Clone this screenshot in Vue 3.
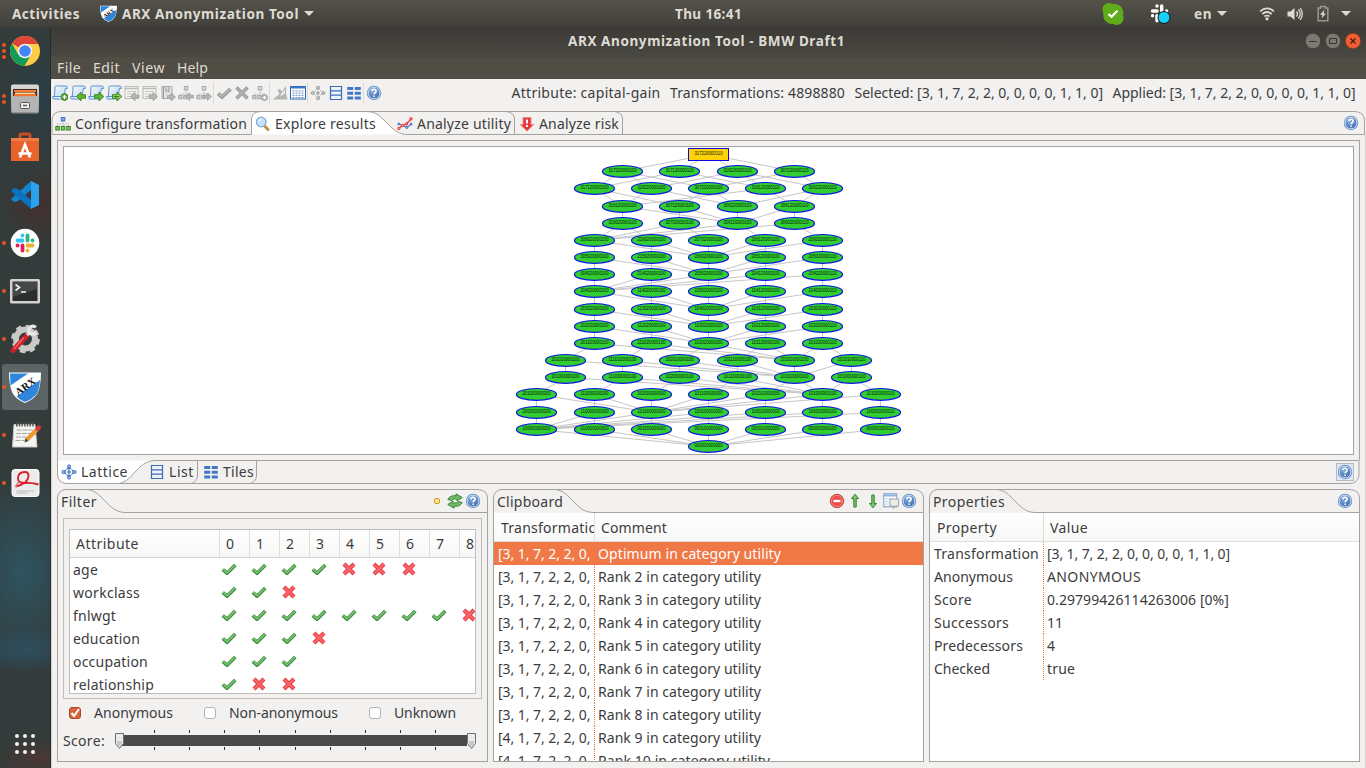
<script setup>
const vFit = {
  mounted(el, { value }) {
    const w = el.getBoundingClientRect().width
    el.style.letterSpacing = `${(value - w) / el.textContent.length}px`
  }
}

const toolbar = [
  ['new', 'open', 'save', 'saveas', 'gimport', 'gexport', 'gbook', 'gtreein', 'gtreeout'],
  ['gcheck', 'gcross', 'gtreeadd'],
  ['gbroom', 'table'],
  ['glattice', 'list', 'tiles'],
  ['help']
]
const status = [
  ['Attribute: capital-gain', 149],
  ['Transformations: 4898880', 175],
  ['Selected: [3, 1, 7, 2, 2, 0, 0, 0, 0, 1, 1, 0]', 248.5],
  ['Applied: [3, 1, 7, 2, 2, 0, 0, 0, 0, 1, 1, 0]', 243]
]
const dock = [
  ['chrome', 3], ['files', 2], ['store', 0], ['code', 0], ['slack', 1],
  ['term', 1], ['tools', 1], ['arx', 1], ['notes', 1], ['pdf', 1]
]

const levels = [
  '317220000110',
  '317220000100 317120000110 316220000110 307220000110',
  '317120000100 316220000100 307220000100 316120000110 306220000110',
  '316120000100 307120000100 306220000100 306120000110',
  '316020000100 307020000100 306120000100 306020000110',
  '306020000100 216020000100 207020000100 206120000100 206020000110',
  '305020000100 215020000100 206020000100 205120000100 205020000110',
  '304020000100 214020000100 205020000100 204120000100 204020000110',
  '204020000100 114020000100 105020000100 104120000100 104020000110',
  '203020000100 113020000100 104020000100 103120000100 103020000110',
  '202020000100 112020000100 103020000100 102120000100 102020000110',
  '201020000100 111020000100 102020000100 101120000100 101020000110',
  '201010000100 111010000100 102010000100 101110000100 101020000100 101010000110',
  '201000000100 111000000100 102000000100 101100000100 101010000100 101000000110',
  '201000000000 111000000000 102000000000 101100000000 101010000000 101000000100 101000000010',
  '200000000000 110000000000 101000000000 100100000000 100010000000 100000000100 100000000010',
  '100000000000 010000000000 001000000000 000100000000 000010000000 000000000100 000000000010',
  '000000000000'
].map((row, r) => {
  const ids = row.split(' ')
  return ids.map((id, i) => ({
    id,
    x: 644.5 + Math.round((i - (ids.length - 1) / 2) * 57.2),
    y: Math.floor(7.47 + r * 17.18) + 0.4
  }))
})
const nodes = levels.flat()
const steps = (a, b) => [...a].reduce((s, c, i) => s + Math.abs(c - b[i]), 0)
const edges = levels.slice(1).flatMap((row, r) =>
  levels[r].flatMap(a => row.filter(b => steps(a.id, b.id) === 1).map(b => ({ a, b })))
)

const filters = [
  ['age', 25, 'yyyynnn'], ['workclass', 67, 'yyn'], ['fnlwgt', 43, 'yyyyyyyyn'],
  ['education', 67, 'yyyn'], ['occupation', 75, 'yyy'], ['relationship', 81, 'ynn']
]
const clipboard = [['Optimum in category utility', 183]]
for (let i = 2; i <= 10; i++) clipboard.push([`Rank ${i} in category utility`, i === 10 ? 172 : 163])
const props = [
  ['Transformation', 105, '[3, 1, 7, 2, 2, 0, 0, 0, 0, 1, 1, 0]', 183],
  ['Anonymous', 79, 'ANONYMOUS', 94],
  ['Score', 38, '0.29799426114263006 [0%]', 182],
  ['Successors', 75, '11', 16],
  ['Predecessors', 89, '4', 8],
  ['Checked', 56, 'true', 28]
]
const checks = [['Anonymous', 79, true], ['Non-anonymous', 109, false], ['Unknown', 62, false]]
const ticks = [36, 71, 106, 141, 177, 212, 247, 282, 317]
</script>

<template>
  <div class="screen">
    <svg class="sprite" width="0" height="0">
      <defs>
        <linearGradient id="pg" x1="0" y1="0" x2="1" y2="1"><stop offset="0" stop-color="#fff" /><stop offset="1" stop-color="#a9cbf0" /></linearGradient>
        <radialGradient id="hg" cx=".4" cy=".3" r=".7"><stop offset="0" stop-color="#8fb2e0" /><stop offset="1" stop-color="#3d6cb0" /></radialGradient>
        <linearGradient id="cab" x1="0" y1="0" x2="0" y2="1"><stop offset="0" stop-color="#dcdcda" /><stop offset="1" stop-color="#8f8f8d" /></linearGradient>
      </defs>
      <symbol id="page" viewBox="0 0 16 16">
        <path d="M3.500 1H14q1.500 0 1.300 2.500h-2L12 12.500q-.2 1.500-2 1.500H1.500Q.3 14 .8 11.500h1.500L3 3q0-2 .5-2z" fill="url(#pg)" stroke="#5b93d1" />
        <path d="M.8 11.500h8.500q-.3 2.500 1 2.500" fill="#fff" stroke="#5b93d1" />
      </symbol>
      <symbol id="new" viewBox="0 0 16 16"><use href="#page" /><circle cx="12.500" cy="12" r="3.400" fill="#58ad35" stroke="#34761d" stroke-width=".8" /><path d="M12.500 10v4M10.500 12h4" stroke="#fff" stroke-width="1.200" /></symbol>
      <symbol id="open" viewBox="0 0 16 16"><use href="#page" /><path d="M6.500 11.500l4.500-4.500v2.700h4.500v3.600H11V16z" fill="#62b62e" stroke="#2f7716" stroke-width=".8" /></symbol>
      <symbol id="save" viewBox="0 0 16 16"><use href="#page" /><path d="M15.800 11.500L11 7v2.700H6.500v3.600H11V16z" fill="#62b62e" stroke="#2f7716" stroke-width=".8" /></symbol>
      <symbol id="saveas" viewBox="0 0 16 16"><use href="#page" /><path d="M15.800 11.500L11 7v2.700H6.500v3.600H11V16z" fill="#8ed060" stroke="#2f7716" stroke-width=".9" /><path d="M8 11.600h5" stroke="#2f7716" /></symbol>
      <symbol id="gtab" viewBox="0 0 16 16"><rect x="1" y="1.500" width="13" height="12" fill="#f3f3f2" stroke="#bcbcba" /><path d="M1 3.500h13" stroke="#bcbcba" stroke-width="1.500" /><path d="M3 6.500h9M3 9h9M3 11.500h5" stroke="#c6c6c4" /></symbol>
      <symbol id="gimport" viewBox="0 0 16 16"><use href="#gtab" /><path d="M6.500 11.500l4.500-4V10h4v3h-4v2.800z" fill="#b5b5b3" stroke="#989896" stroke-width=".7" /></symbol>
      <symbol id="gexport" viewBox="0 0 16 16"><use href="#gtab" /><path d="M15.500 11.500L11 7.500V10H7v3h4v2.800z" fill="#b5b5b3" stroke="#989896" stroke-width=".7" /></symbol>
      <symbol id="gbook" viewBox="0 0 16 16"><path d="M2 1.500h10v12H2z" fill="#e2e2e0" stroke="#adadab" /><path d="M3.500 1.500v12M6 2v5l1.500-1.300L9 7V2" stroke="#999" fill="none" /><path d="M15.500 12L11 8v2.500H7.500v3H11V16z" fill="#b5b5b3" stroke="#989896" stroke-width=".7" /></symbol>
      <symbol id="gtree" viewBox="0 0 16 16"><path d="M8 5v4M2.500 11V9h11" fill="none" stroke="#bbb" stroke-dasharray="1.500 .7" /><rect x="6.300" y="1.500" width="3.500" height="3.500" fill="#d5d5d3" stroke="#aaa" /><rect x=".7" y="10.500" width="3.300" height="3.300" fill="#ccc" stroke="#aaa" /><rect x="5.700" y="10.500" width="3.300" height="3.300" fill="#ccc" stroke="#aaa" /></symbol>
      <symbol id="gtreein" viewBox="0 0 16 16"><use href="#gtree" /><path d="M7.500 11.500l4-3.500v2.200h4v2.800h-4v2.500z" fill="#b5b5b3" stroke="#989896" stroke-width=".7" /></symbol>
      <symbol id="gtreeout" viewBox="0 0 16 16"><use href="#gtree" /><path d="M15.500 11.500l-4-3.500v2.200h-4v2.800h4v2.500z" fill="#b5b5b3" stroke="#989896" stroke-width=".7" /></symbol>
      <symbol id="gtreeadd" viewBox="0 0 16 16"><use href="#gtree" /><circle cx="12.500" cy="12.500" r="3" fill="#c4c4c2" stroke="#999" /><path d="M12.500 11v3M11 12.500h3" stroke="#fff" /></symbol>
      <symbol id="gcheck" viewBox="0 0 16 16"><path d="M2 8.500L6 12l8.500-8" fill="none" stroke="#9c9c9a" stroke-width="3.800" /><path d="M2.500 8.500L6 11.500 14 4" fill="none" stroke="#b3b3b1" stroke-width="2" /></symbol>
      <symbol id="gcross" viewBox="0 0 16 16"><path d="M2.500 2.500l11 11M13.500 2.500l-11 11" stroke="#999" stroke-width="3.500" /><path d="M3 3l10 10M13 3L3 13" stroke="#afafad" stroke-width="2" /></symbol>
      <symbol id="gbroom" viewBox="0 0 16 16"><path d="M14 .5v8l1.500 6H1L7.500 9 5.500 5l2-1 3 2.500z" fill="#b5b5b3" /><path d="M8.500 8.500L13.500 3v5.500l-6 4.500z" fill="#e8e8e6" stroke="#a5a5a3" stroke-width=".7" /></symbol>
      <symbol id="table" viewBox="0 0 16 16"><rect x=".5" y="1.500" width="15" height="12.500" fill="#fff" stroke="#2c63b5" /><path d="M0 2.500h16" stroke="#3c76c9" stroke-width="2" /><path d="M2.500 6h11M2.500 8.200h11M2.500 10.400h11M2.500 12.500h11" stroke="#5484c3" stroke-dasharray="2 1" stroke-width=".9" /></symbol>
      <symbol id="glattice" viewBox="0 0 16 16"><path d="M8 3L3 8l5 5 5-5zM8 3v10" fill="none" stroke="#b1b1af" stroke-dasharray="2 1" /><g fill="#cfcfcd" stroke="#999"><circle cx="8" cy="2.700" r="1.500" /><circle cx="2.700" cy="8" r="1.500" /><circle cx="13.300" cy="8" r="1.500" /><circle cx="8" cy="13.300" r="1.500" /><circle cx="8" cy="8" r="1.200" /></g></symbol>
      <symbol id="lattice" viewBox="0 0 16 16"><path d="M8 3L3 8l5 5 5-5zM8 3v10" fill="none" stroke="#4c7fc6" stroke-dasharray="3 .6" stroke-width="1.200" /><g fill="#a9c7ec" stroke="#2d63b0"><circle cx="8" cy="2.500" r="1.500" /><circle cx="2.500" cy="8" r="1.500" /><circle cx="13.500" cy="8" r="1.500" /><circle cx="8" cy="13.500" r="1.500" /><circle cx="8" cy="8" r="1.200" /></g></symbol>
      <symbol id="list" viewBox="0 0 16 16"><path d="M2.500 1.500h11v13h-11zM2.500 5.800h11M2.500 10.200h11" fill="#edf3fb" stroke="#3d6cb5" stroke-width="1.200" /></symbol>
      <symbol id="tiles" viewBox="0 0 16 16"><path d="M1.200 2h6v3h-6zM8.800 2h6v3h-6zM1.200 6.700h6v3h-6zM8.800 6.700h6v3h-6zM1.200 11.400h6v3h-6zM8.800 11.400h6v3h-6z" fill="#4478c6" /></symbol>
      <symbol id="help" viewBox="0 0 16 16"><circle cx="8" cy="8" r="7.200" fill="#5c8bc8" /><circle cx="8" cy="8" r="5.900" fill="url(#hg)" stroke="#d6e4f7" stroke-width="1" /><path d="M5.800 6.300q.1-2 2.200-2t2.200 1.800q0 1.200-1.300 1.900-.8.400-.8 1.200M8.100 10.400v1.500" stroke="#fff" stroke-width="1.500" fill="none" /></symbol>
      <symbol id="config" viewBox="0 0 16 16"><path d="M8 5v5M2.500 10V8h11v2" fill="none" stroke="#aaa" stroke-dasharray="1 1" /><rect x="6.300" y="1.500" width="3.500" height="3.500" fill="#75aae8" stroke="#3c73c0" /><g fill="#7cc95f" stroke="#378127"><rect x=".8" y="10.500" width="3.500" height="3.500" /><rect x="6.300" y="10.500" width="3.500" height="3.500" /><rect x="11.700" y="10.500" width="3.500" height="3.500" /></g></symbol>
      <symbol id="magnify" viewBox="0 0 16 16"><path d="M9.500 10l3.500 3.500" stroke="#c88d45" stroke-width="3" stroke-linecap="round" /><circle cx="6.200" cy="6" r="4.800" fill="#c3e1fb" stroke="#84abd6" stroke-width="1.300" /><path d="M3.500 6q.5-2.500 3-2.700" stroke="#fff" fill="none" /></symbol>
      <symbol id="chart" viewBox="0 0 16 16"><path d="M1.800 8l3.700 1.500 4.300 2 4.200-3" fill="none" stroke="#4b80cd" stroke-width="1.200" /><path d="M1.800 12.500l3.700-3 4-1.500L14 3" fill="none" stroke="#e33" stroke-width="1.200" /><g fill="#f8baba" stroke="#e22"><circle cx="1.800" cy="12.500" r="1.200" /><circle cx="5.500" cy="9.500" r="1.200" /><circle cx="9.500" cy="8" r="1.200" /><circle cx="14" cy="2.800" r="1.200" /></g><g fill="#bcd5f5" stroke="#3a6fc0"><circle cx="1.800" cy="8" r="1" /><circle cx="9.800" cy="11.500" r="1" /><circle cx="14" cy="8" r="1" /></g></symbol>
      <symbol id="risk" viewBox="0 0 16 16"><path d="M4 1.500h8v7h2.800L8 15.200 1.200 8.500H4z" fill="#e8393a" stroke="#f08a87" /><path d="M8 3.500v4M8 9v2" stroke="#fff" stroke-width="2" /></symbol>
      <symbol id="refresh" viewBox="0 0 16 16"><path d="M.8 6.500Q3 2 9 2.800V.8L15.200 4.500 10 8V6Q6.500 5.200 4.500 7.500zM15.200 9.500Q13 14 7 13.200v2L.8 11.500 6 8v2q3.500.8 5.500-1.500z" fill="#6fbd66" stroke="#327b31" stroke-width=".9" /></symbol>
      <symbol id="minus" viewBox="0 0 16 16"><circle cx="8" cy="8" r="6.700" fill="#e8504a" stroke="#c9403b" /><circle cx="8" cy="8" r="5.600" fill="none" stroke="#f48a80" /><path d="M4.500 8h7" stroke="#fff" stroke-width="2.300" /></symbol>
      <symbol id="up" viewBox="0 0 16 16"><path d="M8 1.200l3.500 4.300H9.200V14H6.800V5.500H4.500z" fill="#7cc96c" stroke="#2f8528" /></symbol>
      <symbol id="down" viewBox="0 0 16 16"><path d="M8 14.800l3.500-4.300H9.200V2H6.800v8.500H4.500z" fill="#7cc96c" stroke="#2f8528" /></symbol>
      <symbol id="comment" viewBox="0 0 16 16"><rect x=".8" y=".8" width="13" height="13" fill="#fff" stroke="#6d97cd" /><path d="M1 2.500h13" stroke="#8cb2e2" stroke-width="2" /><path d="M2.500 6h9M2.500 8.500h4M2.500 11h4" stroke="#8cb2e2" stroke-dasharray="2 1" /><path d="M7 6h8.500v7H12l-1.500 2.500V13H7z" fill="#ededeb" stroke="#a5a5a3" /></symbol>
      <symbol id="y" viewBox="0 0 16 16"><path d="M1.800 8.500L6 12.200 14.300 4" fill="none" stroke="#34843a" stroke-width="3.600" stroke-linejoin="round" /><path d="M2 8.300L6 11.800 14.100 4" fill="none" stroke="#74bd6a" stroke-width="2" /></symbol>
      <symbol id="n" viewBox="0 0 16 16"><path d="M3 3l10 10M13 3L3 13" stroke="#e2323c" stroke-width="4.200" /><path d="M3.300 3.300l9.400 9.400M12.700 3.300l-9.400 9.400" stroke="#fb6568" stroke-width="2.400" /></symbol>
      <symbol id="chrome" viewBox="0 0 32 32"><circle cx="16" cy="16" r="15" fill="#ffcd43" /><path d="M16 16L3 8.500A15 15 0 0 1 29 8.500H16z" fill="#db4437" /><path d="M3 8.500A15 15 0 0 0 15.500 31l7-12H9z" fill="#159b58" /><path d="M16 8.500H29" stroke="#db4437" /><circle cx="16" cy="16" r="7.300" fill="#f3f3f3" /><circle cx="16" cy="16" r="5.800" fill="#4285f4" /></symbol>
      <symbol id="files" viewBox="0 0 32 32"><rect x="2" y="1.500" width="28" height="29" rx="2" fill="url(#cab)" /><rect x="4" y="6" width="24" height="7" fill="#4a2a1c" /><path d="M5 7h22v2H5z" fill="#f47a3a" /><path d="M6 9.500h20v1.500H6z" fill="#fbd7a0" /><path d="M5 11h22v2.500H5z" fill="#ee7534" /><path d="M3 13.500h26V29H3z" fill="#b4b4b2" /><rect x="11.500" y="19.500" width="9" height="6" rx="1" fill="#eee" stroke="#555" /><path d="M14 22.500h4" stroke="#555" stroke-width="1.500" /></symbol>
      <symbol id="store" viewBox="0 0 32 32"><path d="M11 8V4.500q0-1.500 1.500-1.500h7q1.500 0 1.500 1.500V8" fill="none" stroke="#c94b21" stroke-width="3" /><path d="M2 7h28v23H2z" fill="#e9632d" /><path d="M2 7h28v3H2z" fill="#f07b43" /><path d="M11 26.500l5-13 5 13M9.500 22.500h13" fill="none" stroke="#fff" stroke-width="2.600" /></symbol>
      <symbol id="code" viewBox="0 0 32 32"><path d="M22 2l8 4v20l-8 4z" fill="#2ba2ee" /><path d="M22 2L2 20l3 3 4-1L22 11z" fill="#1283cf" /><path d="M22 30L2 12l3-3 4 1 13 11z" fill="#0874be" /></symbol>
      <symbol id="slack" viewBox="0 0 32 32"><circle cx="16" cy="16" r="14.300" fill="#fff" /><g stroke-width="3.800" stroke-linecap="round" fill="none"><path d="M8.500 13.500h5M13.500 8.500v.1" stroke="#36c5f0" /><path d="M18.500 8.500v5M23.500 13.500h.1" stroke="#2eb67d" /><path d="M18.500 18.500h5M18.500 23.500v.1" stroke="#ecb22e" /><path d="M13.500 18.500v5M8.500 18.500h.1" stroke="#e01e5a" /></g></symbol>
      <symbol id="term" viewBox="0 0 32 32"><rect x="1" y="4" width="30" height="24.500" rx="1.500" fill="#d3d3d1" /><rect x="3.500" y="6.500" width="25" height="19.500" fill="#2b2e2e" /><path d="M4 7h24v7L4 22z" fill="#444847" /><path d="M6.500 9.500l4 3-4 3M12 17h5" fill="none" stroke="#eee" stroke-width="1.700" /></symbol>
      <symbol id="tools" viewBox="0 0 32 32"><circle cx="16.500" cy="16" r="9.500" fill="none" stroke="#c9cac8" stroke-width="6" /><circle cx="16.500" cy="16" r="12.800" fill="none" stroke="#c9cac8" stroke-width="3" stroke-dasharray="5.500 4.550" /><path d="M4 27.500L18 12.500" stroke="#cf2027" stroke-width="5" stroke-linecap="round" /><path d="M5 26L15 14.500" stroke="#ef6a6a" stroke-width="1.200" /><path d="M18 12l4-4" stroke="#ddd" stroke-width="3.500" /><path d="M26.800 4.500A4 4 0 1 0 27 9.500" fill="none" stroke="#e8e8e8" stroke-width="3.200" /></symbol>
      <symbol id="arx" viewBox="0 0 32 32"><path d="M0 1.500h32Q32 16 28 23q-4 6-12 9Q8 29 4 23 0 16 0 1.500z" fill="#fff" /><path d="M1 2.500h18L1.500 14.500zM31 9q-.5 9-3.500 14-4 5-11.500 8-5-2-8.500-5.500z" fill="#2f86dd" /><text x="16.500" y="19" font-size="10.500" font-family="Liberation Serif, serif" font-weight="bold" fill="#111" text-anchor="middle" transform="rotate(-36 16.500 15.500)">ARX</text></symbol>
      <symbol id="notes" viewBox="0 0 32 32"><path d="M5 5.500h21L28 28H3.500z" fill="#f4f4f0" stroke="#c8c8c2" /><path d="M7 5.500h18" stroke="#555" stroke-width="4" stroke-dasharray="1.500 1.200" /><path d="M7.500 11h16M7 14.500h16M7 18h10M6.500 21.500h9" stroke="#a4a4a0" stroke-width="1.200" stroke-dasharray="5 1" /><path d="M18 20.500L28 10.500" stroke="#ef9a2e" stroke-width="4.200" /><path d="M28.500 10l1.500-1.500" stroke="#db3941" stroke-width="4.200" stroke-linecap="round" /><path d="M15.500 23.500l1-4.500 3 3z" fill="#443" /></symbol>
      <symbol id="pdf" viewBox="0 0 32 32"><rect x="3" y="2.500" width="27" height="27" rx="3" fill="#ececec" stroke="#fff" /><path d="M6.500 19.500Q19 17 19.500 9q0-4-3.500-4-7 0-7 6.500 0 5 8 4.500 7-.5 12.500 1.500" fill="none" stroke="#d9202c" stroke-width="1.900" /><path d="M9.500 15q-2 2-2.500 5" stroke="#e8707a" stroke-width="1.200" fill="none" /><path d="M7.500 24h18M7.500 26h11" stroke="#bbb" /></symbol>
    </svg>

    <header class="topbar">
      <span v-fit="68" class="act">Activities</span>
      <svg class="appico"><use href="#arx" /></svg>
      <span v-fit="177">ARX Anonymization Tool</span>
      <i class="tri"></i>
      <span v-fit="67" class="clock">Thu 16:41</span>
      <div class="tray">
        <svg class="skype" viewBox="0 0 22 22"><path d="M6 0q3 0 5 1 6-.5 9 4 2 3.500 1 7 2 5-2 8.500-3.500 2.500-7.500.5-5 .5-8.500-3.500-2.500-4-1.500-7.500Q-1 5.500 2 2q2-2 4-2z" fill="#5fab19" /><path d="M6.500 11l3 2.800 6-6" fill="none" stroke="#fff" stroke-width="2.200" /></svg>
        <svg class="slk" viewBox="0 0 22 22"><g stroke="#fff" stroke-width="3.400" stroke-linecap="round"><path d="M3.500 8h4.500M8 3v.1M12.700 3v5M17.500 8h.1M12.700 12.700h4.500M8 12.700v5M3.500 12.700h.1" /></g><circle cx="15" cy="14.500" r="6" fill="#19d0fa" stroke="#111" /></svg>
        <span v-fit="18" class="en">en</span><i class="tri"></i>
        <svg class="wifi" viewBox="0 0 16 16"><g fill="none" stroke="#dfdbd2" stroke-width="1.700"><path d="M1 5.300q7-6 14 0M3.200 8q4.800-4 9.600 0M5.400 10.500q2.600-2 5.200 0" /></g><circle cx="8" cy="12.800" r="1.600" fill="#dfdbd2" /></svg>
        <svg class="vol" viewBox="0 0 16 16"><path d="M1 5.500h3L8 2v12l-4-3.500H1z" fill="#dfdbd2" /><path d="M10 5.500q2 2.500 0 5M12 3.500q3.500 4.500 0 9M13.800 2q4 6 0 12" fill="none" stroke="#dfdbd2" stroke-width="1.300" /></svg>
        <svg class="bat" viewBox="0 0 12 16"><path d="M1.200 2.500h2.500V1h4.600v1.500h2.500v12.700H1.200z" fill="none" stroke="#98958d" stroke-width="1.600" /><path d="M7.500 4L3 9.300h2.500L4.500 13 9 8H6.500z" fill="#dfdbd2" /></svg>
        <i class="tri last"></i>
      </div>
    </header>

    <div class="desk">
      <aside class="dock">
        <div v-for="[name, dots] in dock" :key="name" class="app" :class="{ on: name === 'arx' }">
          <span class="dots"><i v-for="d in dots" :key="d"></i></span>
          <svg><use :href="'#' + name" /></svg>
        </div>
        <div class="grid9"><i v-for="k in 9" :key="k"></i></div>
      </aside>

      <section class="win">
        <div class="title">
          <span v-fit="277">ARX Anonymization Tool - BMW Draft1</span>
          <div class="btns">
            <svg viewBox="0 0 16 16"><circle cx="8" cy="8" r="7.700" fill="#7b7972" stroke="#34332f" stroke-width=".6" /><path d="M4.500 8.500h7" stroke="#34332f" /></svg>
            <svg viewBox="0 0 16 16"><circle cx="8" cy="8" r="7.700" fill="#7b7972" stroke="#34332f" stroke-width=".6" /><path d="M4.500 5.500h7v5h-7z" stroke="#34332f" fill="none" /></svg>
            <svg viewBox="0 0 16 16"><circle cx="8" cy="8" r="7.700" fill="#ee6034" stroke="#7d2c13" stroke-width=".6" /><path d="M5.500 5.500l5 5M10.500 5.500l-5 5" stroke="#45180a" stroke-width="1.200" /></svg>
          </div>
        </div>
        <nav class="menu"><span v-fit="24">File</span><span v-fit="27">Edit</span><span v-fit="33">View</span><span v-fit="31">Help</span></nav>

        <div class="toolbar">
          <div v-for="(g, i) in toolbar" :key="i" class="group"><svg v-for="n in g" :key="n"><use :href="'#' + n" /></svg></div>
          <div class="status"><span v-for="[t, w] in status" :key="t" v-fit="w">{{ t }}</span></div>
        </div>

        <div class="tabs">
          <svg class="frame" viewBox="0 0 1315 24">
            <path d="M200.500 23.500V8Q201 .5 210 .5H316Q325 .5 332 8L340 16Q347 23.500 356 23.500z" fill="#fff" />
            <path d="M1 23.500V9Q1.500 .5 10 .5H1303Q1313 .5 1313.500 9V23.500" class="ln" />
            <path d="M1 23.500H200.500V8Q201 .5 210 .5H316Q325 .5 332 8L340 16Q347 23.500 356 23.500H1314M456 .5Q463.500 2 463.500 8V23M564 .5Q571.500 2 571.500 8V23" class="ln" />
          </svg>
          <div class="tab t1"><svg><use href="#config" /></svg><span v-fit="172">Configure transformation</span></div>
          <div class="tab t2"><svg><use href="#magnify" /></svg><span v-fit="101">Explore results</span></div>
          <div class="tab t3"><svg><use href="#chart" /></svg><span v-fit="94">Analyze utility</span></div>
          <div class="tab t4"><svg><use href="#risk" /></svg><span v-fit="80">Analyze risk</span></div>
          <svg class="q"><use href="#help" /></svg>
        </div>

        <div class="body">
          <div class="viewer">
            <div class="canvas">
              <svg class="lattice" viewBox="0 0 1289 307">
                <line v-for="(e, i) in edges" :key="i" :x1="e.a.x" :y1="e.a.y" :x2="e.b.x" :y2="e.b.y" stroke="#c6c6c6" />
                <g v-for="(n, i) in nodes" :key="n.id + i">
                  <rect v-if="i === 0" :x="n.x - 20" :y="n.y - 5.900" width="40" height="12" fill="#ffd20a" stroke="#0a0ae0" />
                  <ellipse v-else :cx="n.x" :cy="n.y" rx="20" ry="5.900" fill="#32cd32" stroke="#0a14e6" stroke-width="1.200" />
                  <text :x="n.x - 14" :y="n.y + 1" textLength="28" lengthAdjust="spacingAndGlyphs">{{ n.id }}</text>
                </g>
              </svg>
            </div>
            <div class="btabs">
              <svg class="frame" viewBox="0 0 1303 24">
                <path d="M1 .5V15Q2 22.500 9 23.500H62Q70 22 77 13L83 7Q90 .5 98 .5z" fill="#fff" />
                <path d="M98 .5H1302V15Q1301 23 1293 23.500H9Q1 22.500 .500 15V0M62 23.500Q70 22 77 13L83 7Q90 .5 98 .5M140.500 .5V16Q140 22 134 23.500M199.500 .5V16Q199 22 193 23.500" class="ln" />
              </svg>
              <div class="tab b1"><svg><use href="#lattice" /></svg><span v-fit="47">Lattice</span></div>
              <div class="tab b2"><svg><use href="#list" /></svg><span v-fit="25">List</span></div>
              <div class="tab b3"><svg><use href="#tiles" /></svg><span v-fit="31">Tiles</span></div>
              <svg class="q boxed"><use href="#help" /></svg>
            </div>
          </div>

          <div class="panels">
            <div class="panel">
              <div class="phead">
                <svg class="frame" viewBox="0 0 431 24"><path d="M.500 24V9Q1 1 9 .5H421Q430 1 430.500 9V24M30 .5Q38 1 45 9L53 17Q60 23.500 68 23.500H430" class="ln" /></svg>
                <span v-fit="36">Filter</span>
                <div class="acts"><b class="dot"></b><svg><use href="#refresh" /></svg><svg><use href="#help" /></svg></div>
              </div>
              <div class="pbody filter">
                <div class="gbox">
                  <div class="ftable">
                    <div class="frow fhead"><span class="c0"><em v-fit="63">Attribute</em></span><span v-for="k in 9" :key="k" class="cn">{{ k - 1 }}</span></div>
                    <div v-for="[n, w, s] in filters" :key="n" class="frow"><span class="c0"><em v-fit="w">{{ n }}</em></span><svg v-for="(c, i) in s" :key="i"><use :href="'#' + c" /></svg></div>
                  </div>
                </div>
                <div class="checks">
                  <label v-for="[t, w, on] in checks" :key="t"><i :class="{ on }"><svg v-if="on" viewBox="0 0 12 12"><path d="M2.500 6l2.500 3 5-7" fill="none" stroke="#fff" stroke-width="2" /></svg></i><span v-fit="w">{{ t }}</span></label>
                </div>
                <div class="score"><span v-fit="42">Score:</span>
                  <svg viewBox="0 0 362 24">
                    <rect x="6" y="6" width="347" height="11" fill="#4a4a4a" />
                    <path v-for="t in ticks" :key="t" :d="`M${t + 4.500} 1v3M${t + 4.500} 18v3`" stroke="#333" />
                    <g fill="#eceaea" stroke="#6f6f6f"><path d="M1.500 4.500h8v10l-4 5-4-5zM353.500 4.500h8v10l-4 5-4-5z" /></g><path d="M3 12h5v3l-2.500 2.500L3 15zM355 12h5v3l-2.500 2.500L355 15z" fill="#c6c6c6" />
                  </svg>
                </div>
              </div>
            </div>

            <div class="panel">
              <div class="phead">
                <svg class="frame" viewBox="0 0 431 24"><path d="M.500 24V9Q1 1 9 .5H421Q430 1 430.500 9V24M62 .5Q70 1 77 9L85 17Q92 23.500 100 23.500H430" class="ln" /></svg>
                <span v-fit="66">Clipboard</span>
                <div class="acts"><svg><use href="#minus" /></svg><svg><use href="#up" /></svg><svg><use href="#down" /></svg><svg><use href="#comment" /></svg><svg><use href="#help" /></svg></div>
              </div>
              <div class="pbody tbl clip">
                <div class="row hd"><span class="k"><em v-fit="105">Transformation</em></span><span class="v"><em v-fit="66">Comment</em></span></div>
                <div v-for="([t, w], i) in clipboard" :key="t" class="row" :class="{ sel: i === 0 }"><span class="k"><em v-fit="104">[{{ i > 7 ? 4 : 3 }}, 1, 7, 2, 2, 0, 0</em></span><span class="v"><em v-fit="w">{{ t }}</em></span></div>
              </div>
            </div>

            <div class="panel">
              <div class="phead">
                <svg class="frame" viewBox="0 0 431 24"><path d="M.500 24V9Q1 1 9 .5H421Q430 1 430.500 9V24M68 .5Q76 1 83 9L91 17Q98 23.500 106 23.500H430" class="ln" /></svg>
                <span v-fit="72">Properties</span>
                <div class="acts"><svg><use href="#help" /></svg></div>
              </div>
              <div class="pbody tbl prop">
                <div class="row hd"><span class="k"><em v-fit="60">Property</em></span><span class="v"><em v-fit="38">Value</em></span></div>
                <div v-for="[k, w, v, vw] in props" :key="k" class="row"><span class="k"><em v-fit="w">{{ k }}</em></span><span class="v"><em v-fit="vw">{{ v }}</em></span></div>
              </div>
            </div>
          </div>
        </div>
      </section>
    </div>
  </div>
</template>

<style>
body { margin: 0; overflow: hidden; }
</style>

<style scoped>
* { box-sizing: border-box; }
.screen { width: 1366px; height: 768px; overflow: hidden; display: flex; flex-direction: column; font: 14px/20px "Noto Sans", "Open Sans", sans-serif; color: #3c3c3c; background: #f2f1f0; white-space: nowrap; }
.sprite { position: absolute; }
span, em { display: inline-block; font-style: normal; white-space: pre; }
svg { display: block; flex: none; }
.topbar { height: 27px; flex: none; display: flex; align-items: center; background: linear-gradient(#55524a, #403f3a); color: #dfdbd2; font-weight: bold; font-size: 13.500px; position: relative; padding-left: 12px; }
.appico { width: 17px; height: 17px; margin: 0 5px 0 20px; }
.tri { border: 5px solid transparent; border-top-color: #dfdbd2; border-bottom: 0; margin-left: 5px; }
.clock { position: absolute; left: 675px; }
.tray { margin-left: auto; display: flex; align-items: center; height: 27px; }
.skype { width: 22px; height: 22px; margin-right: 25px; }
.slk { width: 22px; height: 22px; margin-right: 23px; }
.wifi { width: 16px; height: 16px; margin: 0 11px 0 32px; }
.vol { width: 17px; height: 16px; margin-right: 14px; }
.bat { width: 12px; height: 17px; }
.last { margin: 0 15px 0 12px; }
.desk { flex: 1; display: flex; min-height: 0; }
.dock { width: 51px; flex: none; display: flex; flex-direction: column; border-right: 1px solid #262b2b; background: radial-gradient(ellipse 60px 24px at 25px 622px, #2d4f60, transparent), radial-gradient(ellipse 60px 100px at 22px 545px, #2e5460, transparent), radial-gradient(ellipse 50px 20px at 40px 731px, #4a3732, transparent), radial-gradient(ellipse 40px 40px at 40px 180px, #43302f, transparent), radial-gradient(ellipse 40px 60px at 40px 70px, #2a3f47, transparent), #333b3b; }
.app { height: 48px; position: relative; display: flex; align-items: center; justify-content: center; padding-right: 1px; }
.app.on::before { content: ""; position: absolute; left: 2px; right: 2px; top: 1px; bottom: 1px; background: #5c6466; border-radius: 3px; }
.app svg { width: 32px; height: 32px; position: relative; }
.dots { position: absolute; left: 2px; top: 0; height: 48px; display: flex; flex-direction: column; justify-content: center; gap: 2px; z-index: 1; }
.dots i { width: 4px; height: 4px; border-radius: 2px; background: #e95420; }
.grid9 { margin: auto auto 14px 15px; display: grid; grid-template-columns: repeat(3, 4px); gap: 4px; }
.grid9 i { width: 4px; height: 4px; border-radius: 2px; background: #f2f2f2; }
.win { flex: 1; min-width: 0; display: flex; flex-direction: column; }
.title { height: 30px; flex: none; background: linear-gradient(#3b3a36, #4a4842); color: #dfdbd2; font-weight: bold; font-size: 13.500px; display: flex; align-items: center; padding: 0 5px 3px 517px; border-top: 1px solid #393834; }
.btns { margin-left: auto; display: flex; gap: 4px; }
.btns svg { width: 16px; height: 16px; }
.menu { height: 22px; flex: none; background: #504d45; color: #dfdbd2; display: flex; gap: 12px; padding: 1px 0 0 6px; }
.toolbar { height: 32px; flex: none; display: flex; padding-bottom: 4px; }
.group { display: flex; align-items: center; padding-bottom: 1px; border-right: 1px solid #dddbd9; margin: 3px 1px 3px 0; }
.group:nth-last-child(2) { border: 0; }
.group svg { width: 16px; height: 16px; margin: 0 1px; }
.status { margin-left: auto; display: flex; gap: 9.500px; padding: 4px 10.500px 0 0; }
.tabs { height: 24px; flex: none; position: relative; display: flex; }
.frame { position: absolute; left: 0; top: 0; width: 100%; height: 100%; }
.ln { fill: none; stroke: #a5a39f; }
.tab { position: relative; display: flex; align-items: center; gap: 4px; height: 24px; padding-top: 2px; }
.tab svg, .q, .acts svg { width: 16px; height: 16px; }
.t1 { margin-left: 4px; width: 200px; }
.t2 { width: 142px; }
.t3 { width: 122px; }
.q { position: relative; margin: 5px 7px 0 auto; }
.tabs .q { margin-top: 4px; }
.body { padding: 5px 5px 0; flex: 1; display: flex; flex-direction: column; min-height: 0; border-right: 1px solid #d5d3d1; border-left: 1px solid #d5d3d1; }
.viewer { height: 344px; flex: none; display: flex; flex-direction: column; }
.canvas { height: 320px; border: 1px solid #a5a39f; border-bottom: 0; padding: 5px 5px 0; }
.lattice { width: 100%; height: 309px; border: 1px solid #a5a39f; background: #fff; }
.lattice text { font-family: "Liberation Sans", sans-serif; font-size: 4.600px; fill: #062006; }
.btabs { height: 24px; position: relative; display: flex; }
.btabs .tab { padding-top: 0; }
.b1 { margin-left: 4px; width: 88px; }
.b2 { width: 54px; }
.btabs .q { margin: 4px 7px 0 auto; }
.boxed { background: #dde7f4; outline: 1px solid #b2bcc9; }
.panels { margin-top: 5px; display: flex; gap: 5px; height: 273px; }
.panel { width: 431px; display: flex; flex-direction: column; min-width: 0; flex: none; }
.phead { height: 24px; flex: none; position: relative; display: flex; align-items: center; padding: 1px 7px 0 4px; }
.phead > span { position: relative; }
.acts { position: relative; margin: -1px 0 0 auto; display: flex; align-items: center; gap: 2px; }
.dot { width: 6px; height: 6px; border: 1px solid #d3991d; background: #ffe98a; border-radius: 2px; margin-right: 5px; }
.pbody { flex: 1; min-height: 0; border: 1px solid #a5a39f; border-top: 0; overflow: hidden; }
.filter { padding: 5px 5px 0; }
.gbox { height: 181px; border: 1px solid #bfbdb9; padding: 10px 5px 0; width: 419px; }
.ftable { height: 165px; border: 1px solid #bfbdb9; background: #fff; overflow: hidden; }
.frow { display: flex; height: 23px; align-items: center; }
.frow svg { width: 16px; height: 16px; margin: 0 13px 2px 1px; }
.c0 { width: 150px; flex: none; padding-left: 3px; }
.fhead { height: 28px; background: linear-gradient(#fff, #f7f7f6); border-bottom: 1px solid #d5d3d1; }
.fhead .c0 { padding-left: 6px; width: 149px; }
.cn { width: 30px; flex: none; height: 27px; line-height: 28px; border-left: 1px solid #dfdedc; padding-left: 6px; }
.checks { display: flex; height: 28px; padding-left: 6px; align-items: center; }
.checks label { display: flex; align-items: center; gap: 13px; }
.checks label:nth-child(1) { width: 135px; }
.checks label:nth-child(2) { width: 165px; }
.checks i { width: 12px; height: 12px; border: 1px solid #b5b3b0; border-radius: 3px; background: #fff; margin-bottom: 1px; }
.checks i.on { background: #dc6239; border-color: #a9452a; }
.checks i svg { width: 12px; height: 12px; margin: -1px; }
.score { display: flex; align-items: center; height: 28px; }
.score svg { width: 362px; height: 24px; margin-left: 9px; }
.tbl { background: #fff; }
.row { display: flex; height: 23px; align-items: center; }
.row.hd { height: 29px; background: linear-gradient(#fff, #f7f7f6); border-bottom: 1px solid #dfdedc; }
.k { overflow: hidden; flex: none; border-right: 1px dotted #ef7a46; height: 23px; line-height: 24px; padding-left: 4px; }
.v { height: 23px; line-height: 24px; padding-left: 3px; }
.hd .k { border-right: 1px solid #dfdedc; height: 28px; line-height: 29px; padding-left: 7px; }
.hd .v { padding-left: 6px; height: 28px; line-height: 29px; }
.clip .k { width: 101px; }
.prop .k { width: 114px; }
.sel { background: #f07746; color: #fff; }
.sel .k { border-color: #f07746; }
</style>
